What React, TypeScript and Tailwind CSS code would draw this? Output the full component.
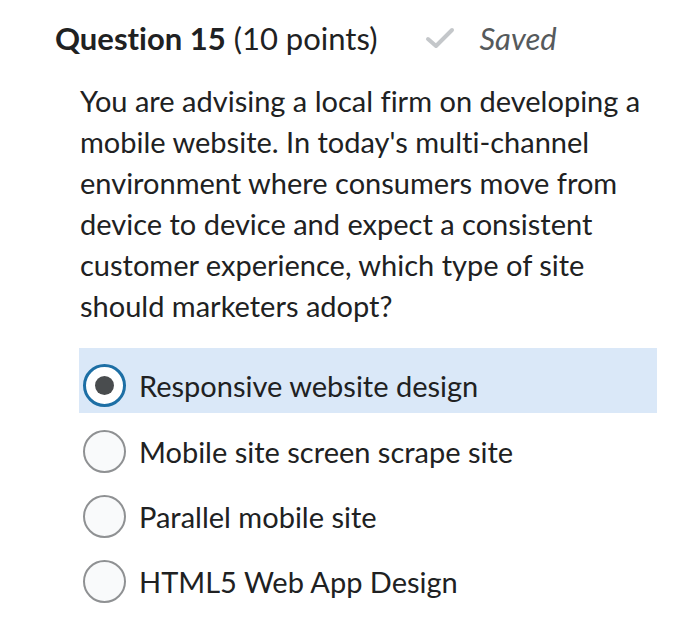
import React from 'react';

const options = [
  'Responsive website design',
  'Mobile site screen scrape site',
  'Parallel mobile site',
  'HTML5 Web App Design',
];

const Radio = ({ checked }: { checked: boolean }) =>
  checked ? (
    <span className="flex h-[43px] w-[43px] shrink-0 items-center justify-center rounded-full border-[3px] border-[#1d6fa5] bg-white">
      <span className="h-[19px] w-[19px] rounded-full bg-[#494c4e]" />
    </span>
  ) : (
    <span className="h-[43px] w-[43px] shrink-0 rounded-full border-2 border-[#8f9193] bg-[#f9fafb]" />
  );

export default function App() {
  return (
    <div className="min-h-[620px] w-[700px] bg-white font-['Lato',sans-serif] text-[#202122] [font-variant-ligatures:none]">
      <div className="flex items-baseline pl-[55px] pt-[15px]">
        <h1 className="text-[31px] leading-[40px]">
          <span className="font-bold">Question 15</span> (10 points)
        </h1>
        <span className="ml-[48px] flex items-baseline gap-[24px] text-[31px] italic text-[#565a5c]">
          <svg width="30" height="22" viewBox="0 0 30 22" className="self-center">
            <path d="M3 12 L11 19 L27 3" fill="none" stroke="#c4c7ca" strokeWidth="4" strokeLinecap="round" strokeLinejoin="round" />
          </svg>
          Saved
        </span>
      </div>
      <p className="mt-[18px] pl-[80px] pr-[40px] text-[29px] leading-[41px]">
        You are advising a local firm on developing a mobile website. In today's multi-channel
        environment where consumers move from device to device and expect a consistent customer
        experience, which type of site should marketers adopt?
      </p>
      <div className="mt-[22px] flex flex-col pl-[79px] pr-[43px] text-[29px]">
        {options.map((o, i) => (
          <div
            key={o}
            className={
              i === 0
                ? 'mb-[6px] flex h-[65px] items-start gap-[13px] bg-[#dae8f8] pl-[4px] pt-[16px]'
                : 'flex h-[65px] items-center gap-[13px] pl-[4px]'
            }
          >
            <Radio checked={i === 0} />
            <span className="leading-[43px]">{o}</span>
          </div>
        ))}
      </div>
    </div>
  );
}
